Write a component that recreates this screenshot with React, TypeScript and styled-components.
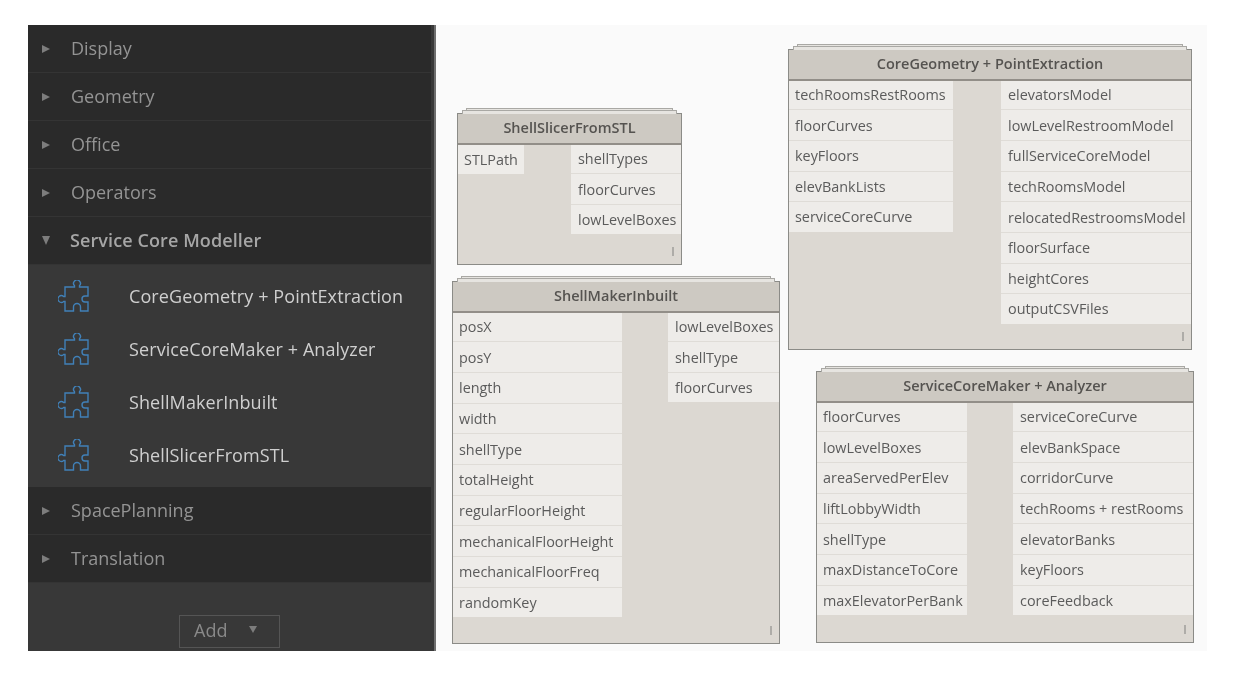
import styled, { createGlobalStyle } from "styled-components";

const categoriesTop = ["Display", "Geometry", "Office", "Operators"];
const categoriesBottom = ["SpacePlanning", "Translation"];
const items = [
  "CoreGeometry + PointExtraction",
  "ServiceCoreMaker + Analyzer",
  "ShellMakerInbuilt",
  "ShellSlicerFromSTL",
];

type NodeData = {
  title: string;
  x: number;
  y: number;
  w: number;
  h: number;
  leftW: number;
  rightW: number;
  inputs: string[];
  outputs: string[];
};

const nodes: NodeData[] = [
  {
    title: "ShellSlicerFromSTL",
    x: 21,
    y: 88,
    w: 225,
    h: 152,
    leftW: 66,
    rightW: 110,
    inputs: ["STLPath"],
    outputs: ["shellTypes", "floorCurves", "lowLevelBoxes"],
  },
  {
    title: "ShellMakerInbuilt",
    x: 16,
    y: 256,
    w: 328,
    h: 363,
    leftW: 169,
    rightW: 111,
    inputs: [
      "posX",
      "posY",
      "length",
      "width",
      "shellType",
      "totalHeight",
      "regularFloorHeight",
      "mechanicalFloorHeight",
      "mechanicalFloorFreq",
      "randomKey",
    ],
    outputs: ["lowLevelBoxes", "shellType", "floorCurves"],
  },
  {
    title: "CoreGeometry + PointExtraction",
    x: 352,
    y: 24,
    w: 404,
    h: 301,
    leftW: 164,
    rightW: 190,
    inputs: [
      "techRoomsRestRooms",
      "floorCurves",
      "keyFloors",
      "elevBankLists",
      "serviceCoreCurve",
    ],
    outputs: [
      "elevatorsModel",
      "lowLevelRestroomModel",
      "fullServiceCoreModel",
      "techRoomsModel",
      "relocatedRestroomsModel",
      "floorSurface",
      "heightCores",
      "outputCSVFiles",
    ],
  },
  {
    title: "ServiceCoreMaker + Analyzer",
    x: 380,
    y: 346,
    w: 378,
    h: 272,
    leftW: 150,
    rightW: 180,
    inputs: [
      "floorCurves",
      "lowLevelBoxes",
      "areaServedPerElev",
      "liftLobbyWidth",
      "shellType",
      "maxDistanceToCore",
      "maxElevatorPerBank",
    ],
    outputs: [
      "serviceCoreCurve",
      "elevBankSpace",
      "corridorCurve",
      "techRooms + restRooms",
      "elevatorBanks",
      "keyFloors",
      "coreFeedback",
    ],
  },
];

const PuzzleIcon = () => (
  <svg width="32" height="32" viewBox="0 0 32 32" fill="none">
    <path
      d="M7 7H16.5V5.7A3.4 3.4 0 1 1 21.5 5.7V7H30V16H27A3 3 0 0 0 27 22H30V31H22.5V27A3.5 3.5 0 0 0 15.5 27V31H7V21.5H5.7A3.4 3.4 0 1 1 5.7 16.5H7Z"
      stroke="#4080b8"
      strokeWidth="1.4"
    />
  </svg>
);

const CategoryRow = ({ name, open }: { name: string; open?: boolean }) => (
  <Category $open={open}>
    <Arrow $open={open} />
    {name}
  </Category>
);

const App = () => {
  return (
    <>
      <GlobalStyle />
      <Page>
        <Sidebar>
          <Library>
            {categoriesTop.map((name) => (
              <CategoryRow key={name} name={name} />
            ))}
            <CategoryRow name="Service Core Modeller" open />
            <ItemList>
              {items.map((name) => (
                <Item key={name}>
                  <ItemIcon>
                    <PuzzleIcon />
                  </ItemIcon>
                  {name}
                </Item>
              ))}
            </ItemList>
            {categoriesBottom.map((name) => (
              <CategoryRow key={name} name={name} />
            ))}
          </Library>
          <AddButton>
            Add
            <AddCaret />
          </AddButton>
        </Sidebar>
        <Canvas>
          {nodes.map((node) => (
            <NodeBox
              key={node.title}
              $x={node.x}
              $y={node.y}
              $w={node.w}
              $h={node.h}
            >
              <NodeHeader>{node.title}</NodeHeader>
              <NodeBody>
                <PortColumn $w={node.leftW}>
                  {node.inputs.map((port) => (
                    <Port key={port} $indent={6}>
                      {port}
                    </Port>
                  ))}
                </PortColumn>
                <PortColumn $w={node.rightW}>
                  {node.outputs.map((port) => (
                    <Port key={port} $indent={7}>
                      {port}
                    </Port>
                  ))}
                </PortColumn>
              </NodeBody>
              <Grip />
            </NodeBox>
          ))}
        </Canvas>
      </Page>
    </>
  );
};

export default App;

const GlobalStyle = createGlobalStyle`
  html, body {
    margin: 0;
    padding: 0;
    background: #ffffff;
  }
  body {
    font-family: "Open Sans", "Noto Sans", "Liberation Sans", sans-serif;
  }
`;

const Page = styled.div`
  display: flex;
  width: 1179px;
  height: 626px;
  padding: 25px 0 36px 28px;
  filter: blur(0.35px);
`;

const Sidebar = styled.div`
  display: flex;
  flex-direction: column;
  align-items: flex-start;
  box-sizing: border-box;
  width: 408px;
  height: 100%;
  background: #383838;
  border-right: 2px solid #6e6e6e;
`;

const Library = styled.div`
  width: 403px;
`;

const Category = styled.div<{ $open?: boolean }>`
  display: flex;
  align-items: center;
  box-sizing: border-box;
  height: 48px;
  padding: 0 0 2px 14px;
  background: #2a2a2a;
  border-bottom: 1px solid #343434;
  color: ${(p) => (p.$open ? "#a6a6a6" : "#949494")};
  font-size: 18px;
  font-weight: ${(p) => (p.$open ? 600 : 400)};
  letter-spacing: ${(p) => (p.$open ? "0.1px" : "0")};
`;

const Arrow = styled.span<{ $open?: boolean }>`
  flex-shrink: 0;
  width: 0;
  height: 0;
  margin: 2px ${(p) => (p.$open ? "20px" : "21px")} 0 0;
  ${(p) =>
    p.$open
      ? `border-left: 4.5px solid transparent;
         border-right: 4.5px solid transparent;
         border-top: 9px solid #7d7d7d;`
      : `border-top: 4.5px solid transparent;
         border-bottom: 4.5px solid transparent;
         border-left: 8px solid #7d7d7d;`}
`;

const ItemList = styled.div`
  display: flex;
  flex-direction: column;
  padding: 5px 0;
  background: #383838;
`;

const Item = styled.div`
  display: flex;
  align-items: center;
  box-sizing: border-box;
  height: 53px;
  padding: 0 0 2px 30px;
  color: #cfcfcf;
  font-size: 18px;
  letter-spacing: 0.1px;
`;

const ItemIcon = styled.span`
  display: flex;
  width: 71px;
`;

const AddButton = styled.div`
  display: flex;
  align-items: center;
  box-sizing: border-box;
  width: 101px;
  height: 33px;
  margin: 32px 0 0 151px;
  padding: 0 0 3px 14px;
  border: 1px solid #555555;
  color: #8a8a8a;
  font-size: 18px;
`;

const AddCaret = styled.span`
  width: 0;
  height: 0;
  margin: 0 0 1px 22px;
  border-left: 4px solid transparent;
  border-right: 4px solid transparent;
  border-top: 7px solid #7d7d7d;
`;

const Canvas = styled.div`
  position: relative;
  flex: 1;
  background: #fafafa;
`;

const NodeBox = styled.div<{ $x: number; $y: number; $w: number; $h: number }>`
  position: absolute;
  left: ${(p) => p.$x}px;
  top: ${(p) => p.$y}px;
  display: flex;
  flex-direction: column;
  box-sizing: border-box;
  width: ${(p) => p.$w}px;
  height: ${(p) => p.$h}px;
  background: #dcd8d2;
  border: 1px solid #8b8b87;

  &::before,
  &::after {
    content: "";
    position: absolute;
    height: 3px;
    border: 1px solid #a9a8a4;
    border-bottom: none;
    background: #e6e4e0;
  }
  &::before {
    left: 4px;
    right: 4px;
    top: -4px;
  }
  &::after {
    left: 8px;
    right: 8px;
    top: -6px;
    height: 1px;
  }
`;

const NodeHeader = styled.div`
  display: flex;
  align-items: center;
  justify-content: center;
  box-sizing: border-box;
  height: 31px;
  flex-shrink: 0;
  padding-bottom: 3px;
  background: #cdc9c2;
  border-bottom: 2px solid #928e88;
  color: #555350;
  font-size: 14.5px;
  font-weight: 600;
`;

const NodeBody = styled.div`
  display: flex;
  justify-content: space-between;
`;

const PortColumn = styled.div<{ $w: number }>`
  display: flex;
  flex-direction: column;
  width: ${(p) => p.$w}px;
`;

const Port = styled.div<{ $indent: number }>`
  display: flex;
  align-items: center;
  box-sizing: border-box;
  height: 30.67px;
  padding-left: ${(p) => p.$indent}px;
  background: #eeece9;
  border-bottom: 1px solid #dfdcd7;
  color: #5b5b5b;
  font-size: 14.4px;
  white-space: nowrap;

  &:first-child {
    height: 29.33px;
    padding-bottom: 1px;
  }
  &:last-child {
    height: 29.33px;
    border-bottom: none;
  }
`;

const Grip = styled.span`
  position: absolute;
  right: 7px;
  bottom: 8px;
  width: 2px;
  height: 9px;
  background: #aeaca8;
`;
